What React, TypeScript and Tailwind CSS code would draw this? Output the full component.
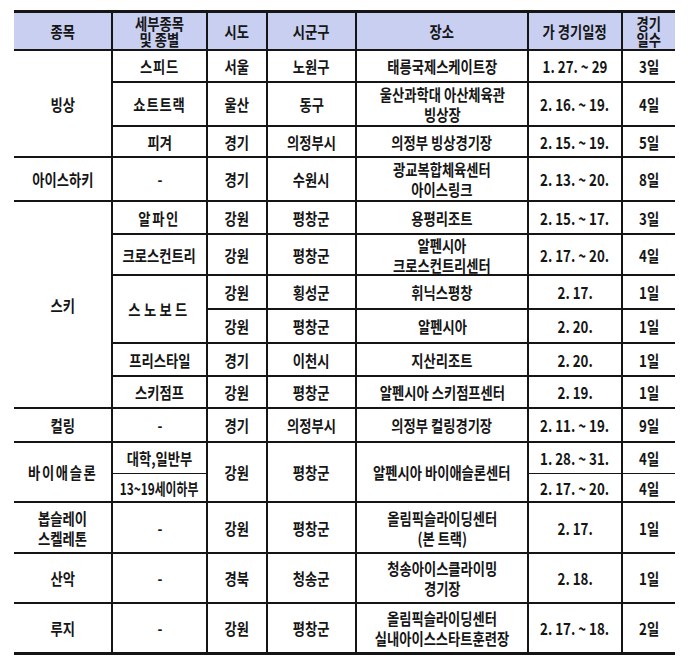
import React from "react";

type CellProps = {
  children?: React.ReactNode;
  last?: boolean;
  thin?: boolean;
  end?: boolean;
  span?: 2 | 3 | 6;
  extra?: string;
  sx?: string;
};

function C({ children, last, thin, end, span, extra, sx }: CellProps) {
  const b = end ? "border-b-[3px]" : thin ? "border-b" : "border-b-2";
  const r = last ? "border-r-0" : "border-r-2";
  const s = span === 2 ? "row-span-2" : span === 3 ? "row-span-3" : span === 6 ? "row-span-6" : "";
  return (
    <div
      className={`flex items-center justify-center text-center border-solid border-[#151515] ${b} ${r} ${s}`}
    >
      <div className={`leading-[20px] whitespace-nowrap ${sx ?? "scale-x-[0.83]"} ${extra ?? ""}`}>{children}</div>
    </div>
  );
}

function H({ children, last }: { children: React.ReactNode; last?: boolean }) {
  return (
    <div
      className={`flex items-center justify-center text-center bg-[#c8cff1] border-solid border-[#151515] border-b-2 ${last ? "border-r-0" : "border-r-2"}`}
    >
      <div className="leading-[16px] whitespace-nowrap scale-x-[0.83]">{children}</div>
    </div>
  );
}

export default function App() {
  return (
    <div className="w-[700px] h-[660px] bg-white pt-[10px] pl-[14px]">
      <div
        className="grid grid-cols-[99px_95px_60px_89px_172px_94px_52px] grid-rows-[38px_32px_44px_31px_44px_33px_41px_34px_34px_33px_32px_34px_31px_29px_51px_50px_51px] border-t-[3px] border-solid border-[#151515] w-[661px] text-[16px] font-bold text-[#161616]"
        style={{ fontFamily: '"Noto Sans CJK KR", "Noto Sans", sans-serif' }}
      >
        {/* header */}
        <H>종목</H>
        <H>
          세부종목
          <br />및 종별
        </H>
        <H>시도</H>
        <H>시군구</H>
        <H>장소</H>
        <H>가 경기일정</H>
        <H last>
          경기
          <br />
          일수
        </H>

        {/* 빙상 */}
        <C span={3}>빙상</C>
        <C extra="tracking-[1px]">스피드</C>
        <C>서울</C>
        <C>노원구</C>
        <C>태릉국제스케이트장</C>
        <C>1. 27. ~ 29</C>
        <C last>3일</C>

        <C extra="tracking-[1px]">쇼트트랙</C>
        <C>울산</C>
        <C>동구</C>
        <C>
          울산과학대 아산체육관
          <br />
          빙상장
        </C>
        <C>2. 16. ~ 19.</C>
        <C last>4일</C>

        <C>피겨</C>
        <C>경기</C>
        <C>의정부시</C>
        <C>의정부 빙상경기장</C>
        <C>2. 15. ~ 19.</C>
        <C last>5일</C>

        {/* 아이스하키 */}
        <C>아이스하키</C>
        <C>-</C>
        <C>경기</C>
        <C>수원시</C>
        <C>
          광교복합체육센터
          <br />
          아이스링크
        </C>
        <C>2. 13. ~ 20.</C>
        <C last>8일</C>

        {/* 스키 */}
        <C span={6}>스키</C>
        <C extra="tracking-[2px]">알파인</C>
        <C>강원</C>
        <C>평창군</C>
        <C>용평리조트</C>
        <C>2. 15. ~ 17.</C>
        <C last>3일</C>

        <C>크로스컨트리</C>
        <C>강원</C>
        <C>평창군</C>
        <C>
          알펜시아
          <br />
          크로스컨트리센터
        </C>
        <C>2. 17. ~ 20.</C>
        <C last>4일</C>

        <C span={2} extra="tracking-[4px]">스노보드</C>
        <C>강원</C>
        <C>횡성군</C>
        <C>휘닉스평창</C>
        <C>2. 17.</C>
        <C last>1일</C>

        <C>강원</C>
        <C>평창군</C>
        <C>알펜시아</C>
        <C>2. 20.</C>
        <C last>1일</C>

        <C>프리스타일</C>
        <C>경기</C>
        <C>이천시</C>
        <C>지산리조트</C>
        <C>2. 20.</C>
        <C last>1일</C>

        <C>스키점프</C>
        <C>강원</C>
        <C>평창군</C>
        <C>알펜시아 스키점프센터</C>
        <C>2. 19.</C>
        <C last>1일</C>

        {/* 컬링 */}
        <C>컬링</C>
        <C>-</C>
        <C>경기</C>
        <C>의정부시</C>
        <C>의정부 컬링경기장</C>
        <C>2. 11. ~ 19.</C>
        <C last>9일</C>

        {/* 바이애슬론 */}
        <C span={2} extra="tracking-[2px]">바이애슬론</C>
        <C thin>대학,일반부</C>
        <C span={2}>강원</C>
        <C span={2}>평창군</C>
        <C span={2}>알펜시아 바이애슬론센터</C>
        <C thin>1. 28. ~ 31.</C>
        <C thin last>4일</C>

        <C sx="scale-x-[0.74]">13~19세이하부</C>
        <C>2. 17. ~ 20.</C>
        <C last>4일</C>

        {/* 봅슬레이 */}
        <C>
          봅슬레이
          <br />
          스켈레톤
        </C>
        <C>-</C>
        <C>강원</C>
        <C>평창군</C>
        <C>
          올림픽슬라이딩센터
          <br />
          (본 트랙)
        </C>
        <C>2. 17.</C>
        <C last>1일</C>

        {/* 산악 */}
        <C>산악</C>
        <C>-</C>
        <C>경북</C>
        <C>청송군</C>
        <C>
          청송아이스클라이밍
          <br />
          경기장
        </C>
        <C>2. 18.</C>
        <C last>1일</C>

        {/* 루지 */}
        <C end>루지</C>
        <C end>-</C>
        <C end>강원</C>
        <C end>평창군</C>
        <C end>
          올림픽슬라이딩센터
          <br />
          실내아이스스타트훈련장
        </C>
        <C end>2. 17. ~ 18.</C>
        <C end last>2일</C>
      </div>
    </div>
  );
}
